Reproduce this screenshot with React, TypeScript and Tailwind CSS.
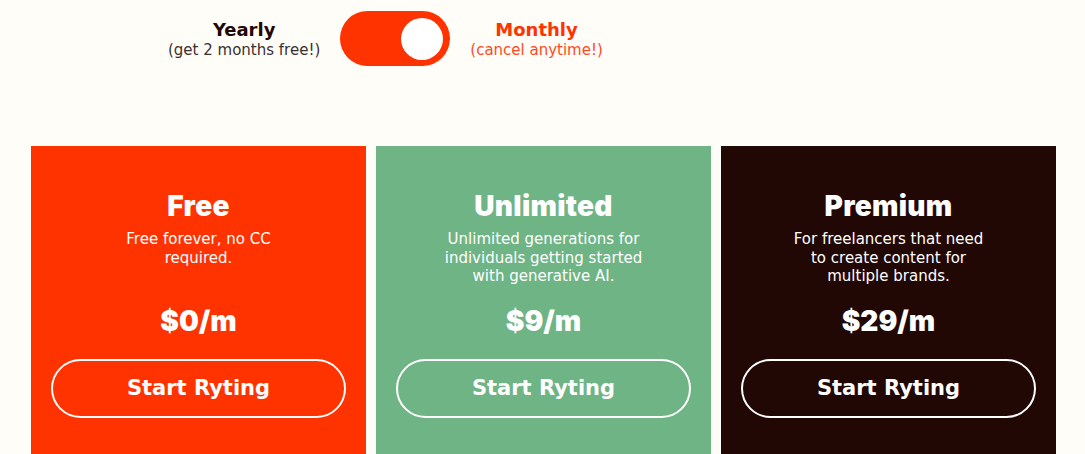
import { useState } from 'react';

const plans = [
  {
    name: 'Free',
    description: 'Free forever, no CC required.',
    price: '$0/m',
    bg: 'bg-[#ff3300]',
  },
  {
    name: 'Unlimited',
    description: 'Unlimited generations for individuals getting started with generative AI.',
    price: '$9/m',
    bg: 'bg-[#6fb485]',
  },
  {
    name: 'Premium',
    description: 'For freelancers that need to create content for multiple brands.',
    price: '$29/m',
    bg: 'bg-[#210804]',
  },
];

const body = { fontFamily: '"DejaVu Sans", "Noto Sans", sans-serif' };
const heavy = { fontFamily: 'Inter, "Liberation Sans", sans-serif' };

export default function App() {
  const [monthly, setMonthly] = useState(true);

  return (
    <div className="min-h-screen bg-[#fffdf8]" style={body}>
      <div className="flex items-center gap-5 pl-[168px] pt-[11px]">
        <div className="text-center">
          <p className="text-[18px] font-bold leading-[22px] text-[#210804]">Yearly</p>
          <p className="text-[15px] leading-[18px] text-[#3b3030]">(get 2 months free!)</p>
        </div>
        <button
          onClick={() => setMonthly(!monthly)}
          className={`flex h-[55px] w-[110px] items-center rounded-full bg-[#ff3300] px-[7px] ${monthly ? 'justify-end' : 'justify-start'}`}
        >
          <span className="block h-[42px] w-[42px] rounded-full bg-white" />
        </button>
        <div className="text-center">
          <p className="text-[18px] font-bold leading-[22px] text-[#ff3300]">Monthly</p>
          <p className="text-[15px] leading-[18px] text-[#ff4a1f]">(cancel anytime!)</p>
        </div>
      </div>

      <div className="mt-[80px] grid grid-cols-[335px_335px_335px] gap-[10px] pl-[31px]">
        {plans.map((plan) => (
          <div key={plan.name} className={`${plan.bg} flex h-[320px] flex-col items-center px-5 pt-[44px] text-white`}>
            <h2 className="text-[28px] font-black leading-[32px] tracking-[0.3px]" style={heavy}>{plan.name}</h2>
            <p className="mt-[8px] h-[75px] max-w-[200px] text-center text-[15px] leading-[18.5px]">{plan.description}</p>
            <p className="text-[28px] font-black leading-[32px]" style={heavy}>{plan.price}</p>
            <button className="mt-[22px] h-[59px] w-full rounded-full border-2 border-white text-[21px] font-bold">
              Start Ryting
            </button>
          </div>
        ))}
      </div>
    </div>
  );
}
